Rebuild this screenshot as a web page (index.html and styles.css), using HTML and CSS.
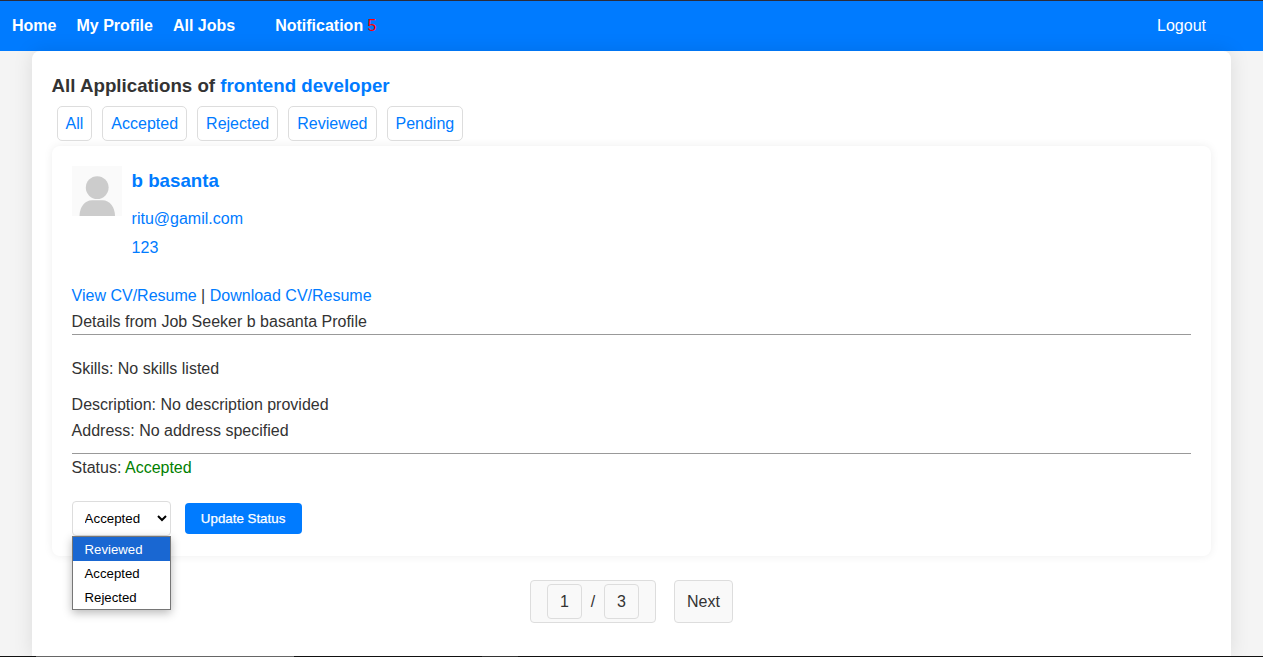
FILE: index.html
```
<!DOCTYPE html>
<html lang="en">
<head>
<meta charset="utf-8">
<title>All Applications</title>
<link rel="stylesheet" href="styles.css">
</head>
<body>
<header class="navbar">
  <nav class="nav-links">
    <a href="#">Home</a>
    <a href="#">My Profile</a>
    <a href="#">All Jobs</a>
    <a href="#" class="notification">Notification <span class="count">5</span></a>
  </nav>
  <a href="#" class="logout">Logout</a>
</header>
<main class="container">
  <h2 class="title">All Applications of <a href="#">frontend developer</a></h2>
  <div class="filters">
    <a href="#">All</a>
    <a href="#">Accepted</a>
    <a href="#">Rejected</a>
    <a href="#">Reviewed</a>
    <a href="#">Pending</a>
  </div>
  <section class="card">
    <div class="applicant">
      <svg class="avatar" viewBox="0 0 50 50" width="50" height="50">
        <rect width="50" height="50" fill="#fafafa"/>
        <circle cx="25.2" cy="21.6" r="11.4" fill="#ccc"/>
        <path d="M7.5 50C7.5 41 13 34.3 20 34.3H30.500C37.500 34.300 43 41 43 50Z" fill="#ccc"/>
      </svg>
      <div class="contact">
        <h3 class="name"><a href="#">b basanta</a></h3>
        <a href="#" class="email">ritu@gamil.com</a>
        <a href="#" class="phone">123</a>
      </div>
    </div>
    <p class="line"><a href="#">View CV/Resume</a> | <a href="#">Download CV/Resume</a></p>
    <p class="line">Details from Job Seeker b basanta Profile</p>
    <hr class="rule">
    <p class="line skills">Skills: No skills listed</p>
    <p class="line">Description: No description provided</p>
    <p class="line">Address: No address specified</p>
    <hr class="rule rule-status">
    <p class="line">Status: <span class="accepted">Accepted</span></p>
    <form class="status-form">
      <div class="select-wrap">
        <select class="status-select"><option>Accepted</option></select>
        <ul class="options">
          <li class="active">Reviewed</li>
          <li>Accepted</li>
          <li>Rejected</li>
        </ul>
      </div>
      <button type="button" class="update">Update Status</button>
    </form>
  </section>
  <div class="pagination">
    <div class="pages"><span class="page">1</span><span class="slash">/</span><span class="page">3</span></div>
    <a href="#" class="next">Next</a>
  </div>
</main>
<div class="bottom-edge"></div>
</body>
</html>
```
FILE: styles.css
```
* {
  box-sizing: border-box;
}

body {
  display: flex;
  flex-direction: column;
  height: 657px;
  margin: 0;
  overflow: hidden;
  background: #f4f4f4;
  color: #333;
  font: 16px/26px "Liberation Sans", Arial, sans-serif;
}

a {
  color: #007bff;
  text-decoration: none;
}

h2, h3, p, ul {
  margin: 0;
  padding: 0;
}

.navbar {
  display: flex;
  flex: none;
  align-items: center;
  justify-content: space-between;
  height: 51px;
  padding: 0 57px 0 12px;
  border-top: 1px solid #2b2c3a;
  background: #007bff;
}

.navbar a {
  color: #fff;
}

.nav-links {
  display: flex;
  gap: 20px;
  font-weight: bold;
}

.notification {
  margin-left: 20px;
}

.nav-links .count {
  color: #f00;
  font-weight: normal;
}

.container {
  flex: 1;
  width: 95%;
  min-height: 0;
  margin: 0 auto;
  padding: 20px 20px 0;
  border-radius: 8px 8px 0 0;
  background: #fff;
  box-shadow: 0 0 20px rgba(0, 0, 0, 0.1);
}

.title {
  height: 35px;
  font-size: 18.72px;
  line-height: 29px;
}

.filters {
  display: flex;
  gap: 10px;
  padding-left: 5px;
}

.filters a {
  height: 35px;
  padding: 0 8px;
  border: 1px solid #ddd;
  border-radius: 5px;
  line-height: 33px;
}

.card {
  height: 410px;
  margin-top: 5px;
  padding: 20px;
  border-radius: 8px;
  box-shadow: 0 0 10px rgba(0, 0, 0, 0.07);
}

.applicant {
  display: flex;
  gap: 10px;
  height: 117px;
}

.contact {
  display: flex;
  flex-direction: column;
}

.name {
  margin-bottom: 11px;
  font-size: 18.72px;
  line-height: 29px;
}

.email {
  margin-bottom: 3px;
}

.rule {
  height: 1px;
  margin: -1px 0 0;
  border: 0;
  background: #999;
}

.skills {
  margin: 21px 0 10px;
}

.rule-status {
  margin: 9px 0 1px;
}

.accepted {
  color: #008000;
}

.status-form {
  display: flex;
  align-items: center;
  gap: 14px;
  height: 35px;
  margin-top: 20px;
}

.select-wrap {
  position: relative;
  width: 99px;
  height: 35px;
}

.status-select {
  display: block;
  width: 99px;
  height: 35px;
  padding: 8px;
  border: 1px solid #ddd;
  border-radius: 4px;
  background: #fff;
  color: #000;
  font: 13.333px "Liberation Sans", Arial, sans-serif;
}

.options {
  position: absolute;
  z-index: 1;
  top: 35px;
  left: 0;
  width: 99px;
  border: 1px solid #767676;
  background: #fff;
  box-shadow: 0 3px 9px rgba(0, 0, 0, 0.28);
  color: #000;
  font-size: 13.2px;
  line-height: 24px;
  list-style: none;
}

.options li {
  height: 24px;
  padding-left: 12px;
  line-height: 26px;
}

.options .active {
  background: #1967d2;
  color: #fff;
}

.update {
  width: 117px;
  height: 31px;
  padding: 0;
  border: 0;
  border-radius: 4px;
  background: #007bff;
  color: #fff;
  font: 13.333px "Liberation Sans", Arial, sans-serif;
  -webkit-text-stroke: 0.25px #fff;
}

.pagination {
  display: flex;
  justify-content: center;
  gap: 18px;
  margin-top: 24px;
}

.pages,
.next {
  height: 43px;
  border: 1px solid #ddd;
  border-radius: 4px;
  background: #f9f9f9;
  color: #333;
}

.pages {
  display: flex;
  align-items: center;
  justify-content: center;
  width: 126px;
}

.page {
  width: 35px;
  height: 35px;
  border: 1px solid #ddd;
  border-radius: 4px;
  line-height: 33px;
  text-align: center;
}

.slash {
  width: 22px;
  text-align: center;
}

.next {
  width: 59px;
  line-height: 41px;
  text-align: center;
}

.bottom-edge {
  z-index: 1;
  flex: none;
  height: 1px;
  background: linear-gradient(to right, #111 36px, #666 36px 294px, #111 294px 482px, #333 482px 518px, #111 518px);
}
```
